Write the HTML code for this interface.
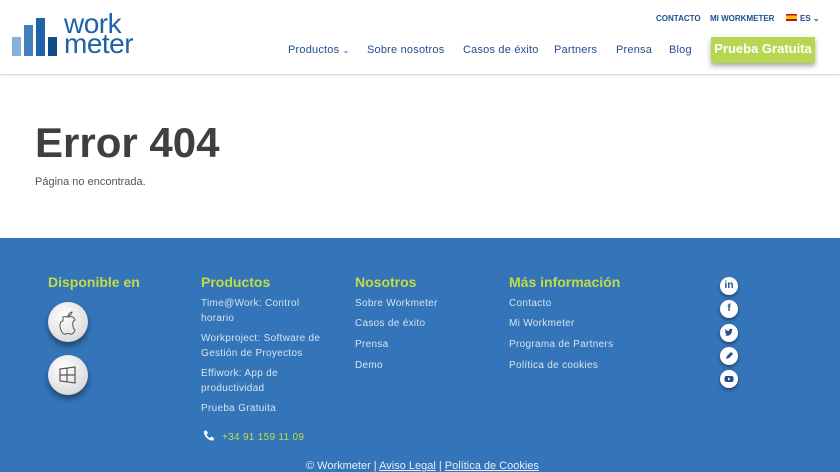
<!DOCTYPE html>
<html><head><meta charset="utf-8">
<style>
*{margin:0;padding:0;box-sizing:border-box}
body{width:840px;height:472px;overflow:hidden;font-family:"Liberation Sans",sans-serif;background:#fff;position:relative}
.hdr{position:absolute;left:0;top:0;width:840px;height:75px;background:#fff;border-bottom:1px solid #ddd;box-shadow:0 1px 3px rgba(0,0,0,.08)}
.a{position:absolute;white-space:nowrap}
.top{font-size:8px;font-weight:bold;color:#1d4f8c;top:14px}
.nav{font-size:11px;color:#1d4f8c;top:44px;letter-spacing:.2px}
.btn{left:711px;top:37px;width:104px;height:26px;background:#b7d651;color:#fff;font-size:13px;font-weight:bold;text-align:center;line-height:24px;box-shadow:0 3px 5px rgba(0,0,0,.35)}
.ft{position:absolute;left:0;top:238px;width:840px;height:234px;background:#3474b8}
.h{font-size:14px;color:#c2dc45;top:36px;font-weight:bold}
.l{font-size:10px;color:#d7e4f2;line-height:15px;letter-spacing:.3px}
.circ{position:absolute;width:40px;height:40px;border-radius:50%;background:radial-gradient(circle at 40% 35%,#fff,#ddd 70%,#bbb);box-shadow:0 4px 6px rgba(0,0,0,.4)}
.soc{position:absolute;left:720px;width:18px;height:18px;border-radius:50%;background:#fff;box-shadow:0 2px 3px rgba(0,0,0,.4);color:#1d4f8c;font-size:10px;font-weight:bold;text-align:center;line-height:18px}
</style></head><body>
<div class="hdr">
 <div class="a" style="left:12px;top:37px;width:9px;height:19px;background:#85b0da"></div>
 <div class="a" style="left:24px;top:25px;width:9px;height:31px;background:#3f7fc0"></div>
 <div class="a" style="left:36px;top:18px;width:9px;height:38px;background:#1f62aa"></div>
 <div class="a" style="left:48px;top:37px;width:9px;height:19px;background:#124b8a"></div>
 <div class="a" style="left:64px;top:14px;font-size:28px;color:#1f62aa;line-height:20px;letter-spacing:-0.5px">work<br>meter</div>
 <div class="a top" style="left:656px">CONTACTO</div>
 <div class="a top" style="left:710px">MI WORKMETER</div>
 <div class="a" style="left:786px;top:14px;width:11px;height:7px;background:linear-gradient(#c60b1e 25%,#ffc400 25%,#ffc400 75%,#c60b1e 75%)"></div>
 <div class="a top" style="left:800px">ES ⌄</div>
 <div class="a nav" style="left:288px">Productos <span style="font-size:8px">⌄</span></div>
 <div class="a nav" style="left:367px">Sobre nosotros</div>
 <div class="a nav" style="left:463px">Casos de éxito</div>
 <div class="a nav" style="left:554px">Partners</div>
 <div class="a nav" style="left:616px">Prensa</div>
 <div class="a nav" style="left:669px">Blog</div>
 <div class="a btn">Prueba Gratuita</div>
</div>
<div class="a" style="left:35px;top:119px;font-size:42px;font-weight:bold;color:#3f3f3f">Error 404</div>
<div class="a" style="left:35px;top:176px;font-size:11px;color:#555">Página no encontrada.</div>
<div class="ft">
 <div class="a h" style="left:48px">Disponible en</div>
 <div class="a h" style="left:201px">Productos</div>
 <div class="a h" style="left:355px">Nosotros</div>
 <div class="a h" style="left:509px">Más información</div>
 <div class="circ" style="left:48px;top:64px"><svg width="40" height="40" viewBox="0 0 40 40"><path d="M20 14c1-3 3-4 4-4 0 2-2 4-4 4zM15 15c2-1 4 0 5 0s3-1 5 0c1 1 2 2 2 3-2 1-3 3-2 6 0 2 1 3 2 4-1 3-3 5-5 4-2-1-2-1-4 0-2 1-4-1-5-4-2-4-1-9 2-9z" fill="none" stroke="#555" stroke-width="1"/></svg></div>
 <div class="circ" style="left:48px;top:117px"><svg width="40" height="40" viewBox="0 0 40 40"><path d="M12 14l15-2v16l-15-2zM12 20h15M19 13v14" fill="none" stroke="#555" stroke-width="1.2"/></svg></div>
 <div class="a l" style="left:201px;top:58px">Time@Work: Control<br>horario</div>
 <div class="a l" style="left:201px;top:93px">Workproject: Software de<br>Gestión de Proyectos</div>
 <div class="a l" style="left:201px;top:128px">Effiwork: App de<br>productividad</div>
 <div class="a l" style="left:201px;top:163px">Prueba Gratuita</div>
 <svg class="a" style="left:202px;top:192px" width="13" height="13" viewBox="0 0 13 13"><path d="M2 1l2.5-.5 1.5 3-1.5 1c.5 1.5 2 3 3.5 3.5l1-1.5 3 1.5-.5 2.5c-5 .5-10-4.5-9.5-9.5z" fill="#fff"/></svg>
 <div class="a l" style="left:222px;top:192px;color:#c2dc45">+34 91 159 11 09</div>
 <div class="a l" style="left:355px;top:58px">Sobre Workmeter</div>
 <div class="a l" style="left:355px;top:78px">Casos de éxito</div>
 <div class="a l" style="left:355px;top:99px">Prensa</div>
 <div class="a l" style="left:355px;top:120px">Demo</div>
 <div class="a l" style="left:509px;top:58px">Contacto</div>
 <div class="a l" style="left:509px;top:78px">Mi Workmeter</div>
 <div class="a l" style="left:509px;top:99px">Programa de Partners</div>
 <div class="a l" style="left:509px;top:120px">Política de cookies</div>
 <div class="soc" style="top:39px">in</div>
 <div class="soc" style="top:62px">f</div>
 <div class="soc" style="top:86px"><svg width="10" height="10" viewBox="0 0 10 10" style="margin-top:4px"><path d="M1 7c3 2 7 0 7-5l1-1-1 .3C7 0 5 1 5 3 3 3 2 2 1 1c0 1 0 2 1 3H1c0 1 1 2 2 2-1 1-2 1-2 1z" fill="#1d4f8c"/></svg></div>
 <div class="soc" style="top:109px"><svg width="10" height="10" viewBox="0 0 10 10" style="margin-top:4px"><path d="M2 8l1-3 4-4 2 2-4 4z" fill="#1d4f8c"/></svg></div>
 <div class="soc" style="top:132px"><svg width="10" height="10" viewBox="0 0 10 10" style="margin-top:4px"><rect x="0.5" y="2" width="9" height="6" rx="2" fill="#1d4f8c"/><path d="M4 3.5v3l2.5-1.5z" fill="#fff"/></svg></div>
 <div class="a" style="left:306px;top:222px;font-size:11px;color:#e6eef7">© Workmeter | <u>Aviso Legal</u> | <u>Política de Cookies</u></div>
</div>
</body></html>
